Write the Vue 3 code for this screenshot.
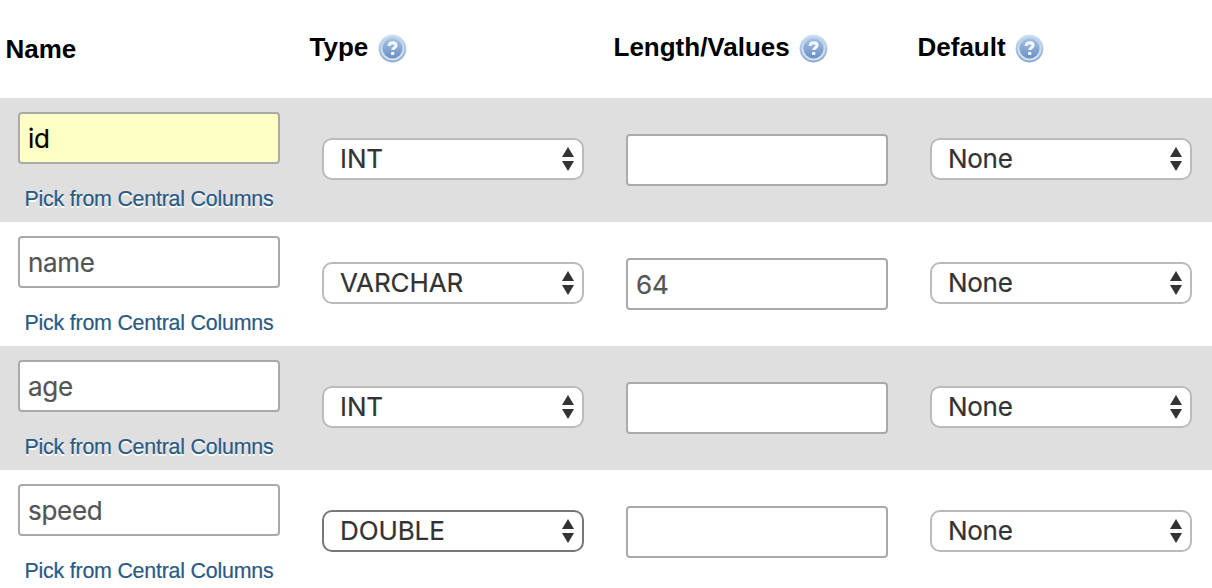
<script setup>
import { ref } from 'vue'

const headings = [
  { label: 'Name', help: false },
  { label: 'Type', help: true },
  { label: 'Length/Values', help: true },
  { label: 'Default', help: true },
]

const rows = ref([
  { name: 'id', type: 'INT', length: '', default: 'None', filled: true },
  { name: 'name', type: 'VARCHAR', length: '64', default: 'None' },
  { name: 'age', type: 'INT', length: '', default: 'None' },
  { name: 'speed', type: 'DOUBLE', length: '', default: 'None', hovered: true },
])
const types = ['INT', 'VARCHAR', 'DOUBLE']
</script>

<template>
  <main class="columns">
    <header class="head">
      <div v-for="h in headings" :key="h.label" class="heading" :class="{ plain: !h.help }">
        <span>{{ h.label }}</span>
        <svg v-if="h.help" class="help" viewBox="0 0 30 30">
          <defs>
            <linearGradient id="ring" x1="0" y1="0" x2="0" y2="1">
              <stop offset="0" stop-color="#d3e3f2" />
              <stop offset="1" stop-color="#86a5d0" />
            </linearGradient>
            <linearGradient id="gap" x1="0" y1="0" x2="0" y2="1">
              <stop offset="0" stop-color="#b9d0e8" />
              <stop offset="1" stop-color="#d6e4f3" />
            </linearGradient>
            <linearGradient id="disc" x1="0" y1="0" x2="0" y2="1">
              <stop offset="0" stop-color="#a3c1e2" />
              <stop offset="1" stop-color="#6a8fc5" />
            </linearGradient>
          </defs>
          <circle cx="15" cy="15" r="14.4" fill="url(#ring)" />
          <circle cx="15" cy="15" r="12.4" fill="url(#gap)" />
          <circle cx="15" cy="15" r="10.4" fill="url(#disc)" />
          <path d="M11.6 12.3c0-2 1.4-3.1 3.6-3.1s3.5 1.1 3.5 2.8c0 2.3-3.5 2.2-3.5 4.6" fill="none" stroke="#f4f8fd" stroke-width="3.2" />
          <rect x="13.5" y="18.6" width="3.4" height="3.2" rx=".8" fill="#f4f8fd" />
        </svg>
      </div>
    </header>

    <section v-for="row in rows" :key="row.name" class="row">
      <div class="cell name-cell">
        <input v-model="row.name" class="field name" :class="{ filled: row.filled }" type="text">
        <a class="pick">Pick from Central Columns</a>
      </div>
      <div class="cell">
        <div class="picker">
          <select v-model="row.type" class="select" :class="{ hovered: row.hovered }">
            <option v-for="t in types" :key="t">{{ t }}</option>
          </select>
          <svg class="arrows" viewBox="0 0 12 24"><path d="M6 0l6 10H0zM0 14h12L6 24z" /></svg>
        </div>
      </div>
      <div class="cell">
        <input v-model="row.length" class="field" type="text">
      </div>
      <div class="cell">
        <div class="picker">
          <select v-model="row.default" class="select default">
            <option>None</option>
          </select>
          <svg class="arrows" viewBox="0 0 12 24"><path d="M6 0l6 10H0zM0 14h12L6 24z" /></svg>
        </div>
      </div>
    </section>
  </main>
</template>

<style>
body {
  margin: 0;
  background: #fff;
}
</style>

<style scoped>
.columns {
  width: 1212px;
  height: 588px;
  overflow: hidden;
  font-family: "Liberation Sans", Arial, sans-serif;
}
.head,
.row {
  display: grid;
  grid-template-columns: repeat(4, 304px);
}
.head {
  height: 98px;
}
.heading {
  display: flex;
  align-items: center;
  gap: 9.5px;
  height: 30px;
  padding: 34px 0 0 5.5px;
  font-size: 26px;
  line-height: 30px;
  font-weight: bold;
  color: #000;
}
.heading span {
  margin-top: -4px;
}
.heading.plain span {
  margin-top: 0;
}
.help {
  width: 29px;
  height: 29px;
  margin-top: -1px;
}
.row {
  height: 124px;
}
.row:nth-of-type(odd) {
  background: #dfdfdf;
}
.cell {
  display: flex;
  align-items: center;
  padding-left: 18px;
}
.name-cell {
  flex-direction: column;
  align-items: flex-start;
  padding-top: 14px;
}
.field,
.select {
  box-sizing: border-box;
  width: 262px;
  margin: 0;
  outline: none;
  font-family: Inter, "Liberation Sans", sans-serif;
  font-size: 26px;
  letter-spacing: -0.1px;
  -webkit-text-stroke: 0.2px currentColor;
}
.field {
  height: 52px;
  padding: 0 8px;
  border: 2px solid #aaa;
  border-radius: 4px;
  background: #fff;
  color: #555;
}
.field.name,
.select.default {
  letter-spacing: -0.3px;
}
.field.filled {
  background: #feffc4;
  color: #000;
}
.pick {
  padding: 23px 0 0 6.5px;
  font-size: 21.4px;
  line-height: 24px;
  letter-spacing: -0.22px;
  color: #2a5a83;
  text-shadow: 0 2px 0 #fff;
  white-space: nowrap;
  -webkit-text-stroke: 0.2px currentColor;
}
.picker {
  position: relative;
  margin-top: -2px;
}
.select {
  display: block;
  height: 42px;
  padding: 0 16px 2px;
  appearance: none;
  border: 2px solid #bbb;
  border-radius: 10px;
  background: #fff;
  color: #333;
}
.select.hovered {
  border-color: #777;
}
.arrows {
  position: absolute;
  top: 9px;
  right: 10px;
  width: 12px;
  height: 24px;
  fill: #333;
  pointer-events: none;
}
</style>
